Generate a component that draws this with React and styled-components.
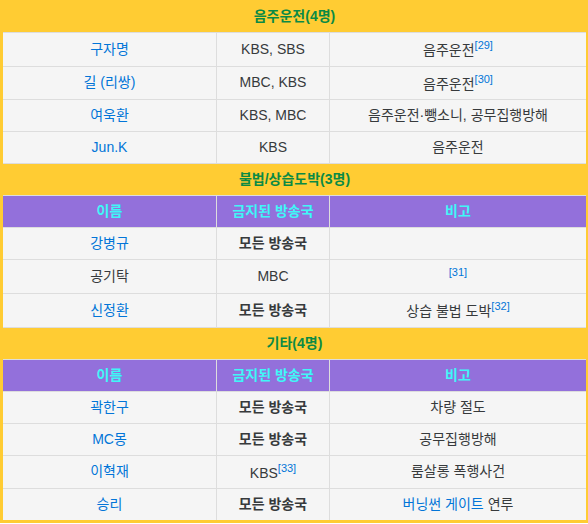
import React from 'react'
import styled, { createGlobalStyle } from 'styled-components'

const GlobalStyle = createGlobalStyle`
  body {
    margin: 0;
    background: #fff;
    font-family: "Liberation Sans", Arial, "Noto Sans CJK KR", sans-serif;
  }
`

const sections = [
  {
    title: '음주운전(4명)',
    head: false,
    rows: [
      { name: '구자명', link: true, tv: 'KBS, SBS', note: [{ t: '음주운전' }, { sup: '[29]' }] },
      { name: '길 (리쌍)', link: true, tv: 'MBC, KBS', note: [{ t: '음주운전' }, { sup: '[30]' }] },
      { name: '여욱환', link: true, tv: 'KBS, MBC', note: [{ t: '음주운전·뺑소니, 공무집행방해' }] },
      { name: 'Jun.K', link: true, tv: 'KBS', note: [{ t: '음주운전' }] },
    ],
  },
  {
    title: '불법/상습도박(3명)',
    head: true,
    rows: [
      { name: '강병규', link: true, tv: '모든 방송국', bold: true, note: [] },
      { name: '공기탁', link: false, tv: 'MBC', note: [{ sup: '[31]' }] },
      { name: '신정환', link: true, tv: '모든 방송국', bold: true, note: [{ t: '상습 불법 도박' }, { sup: '[32]' }] },
    ],
  },
  {
    title: '기타(4명)',
    head: true,
    rows: [
      { name: '곽한구', link: true, tv: '모든 방송국', bold: true, note: [{ t: '차량 절도' }] },
      { name: 'MC몽', link: true, tv: '모든 방송국', bold: true, note: [{ t: '공무집행방해' }] },
      { name: '이혁재', link: true, tv: 'KBS', tvSup: '[33]', note: [{ t: '룸살롱 폭행사건' }] },
      { name: '승리', link: true, tv: '모든 방송국', bold: true, note: [{ t: '버닝썬 게이트', link: true }, { t: ' 연루' }] },
    ],
  },
]

const App = () => {
  return (
    <>
      <GlobalStyle />
      <Table>
        <colgroup>
          <col style={{ width: 215 }} />
          <col style={{ width: 113 }} />
          <col />
        </colgroup>
        {sections.map((s, si) => (
          <tbody key={s.title}>
            <tr>
              <SectionCell colSpan={3} $first={si === 0}>
                {s.title}
              </SectionCell>
            </tr>
            {s.head && (
              <tr>
                <HeadCell>이름</HeadCell>
                <HeadCell>금지된 방송국</HeadCell>
                <HeadCell>비고</HeadCell>
              </tr>
            )}
            {s.rows.map((r) => (
              <tr key={r.name}>
                <Cell>{r.link ? <Link>{r.name}</Link> : r.name}</Cell>
                <Cell $bold={r.bold}>
                  {r.tv}
                  {r.tvSup && <Sup>{r.tvSup}</Sup>}
                </Cell>
                <Cell>
                  {r.note.map((n, i) =>
                    n.sup ? (
                      <Sup key={i}>{n.sup}</Sup>
                    ) : n.link ? (
                      <Link key={i}>{n.t}</Link>
                    ) : (
                      <span key={i}>{n.t}</span>
                    )
                  )}
                </Cell>
              </tr>
            ))}
          </tbody>
        ))}
      </Table>
    </>
  )
}

export default App

const Table = styled.table`
  width: 588px;
  table-layout: fixed;
  border-collapse: collapse;
  border: 3px solid #ffcc33;
  border-right-width: 2px;
  font-size: 14px;
  line-height: 21px;
  color: #373a3c;
`

const SectionCell = styled.th`
  background: #ffcc33;
  color: #0b8a45;
  font-weight: bold;
  text-align: center;
  padding: ${(p) => (p.$first ? '3px 10px 5px' : '5px 10px')};
  border: 1px solid #dddddd;
`

const HeadCell = styled.th`
  background: #9370db;
  color: #3ff7f7;
  font-weight: bold;
  text-align: center;
  padding: 5px 10px;
  border: 1px solid #dddddd;
`

const Cell = styled.td`
  background: #f5f5f5;
  text-align: center;
  padding: 5px 10px;
  border: 1px solid #dddddd;
  font-weight: ${(p) => (p.$bold ? 'bold' : 'normal')};
`

const Link = styled.span`
  color: #0275d8;
`

const Sup = styled.sup`
  color: #0275d8;
  font-size: 11px;
  line-height: 14px;
  font-weight: normal;
`
